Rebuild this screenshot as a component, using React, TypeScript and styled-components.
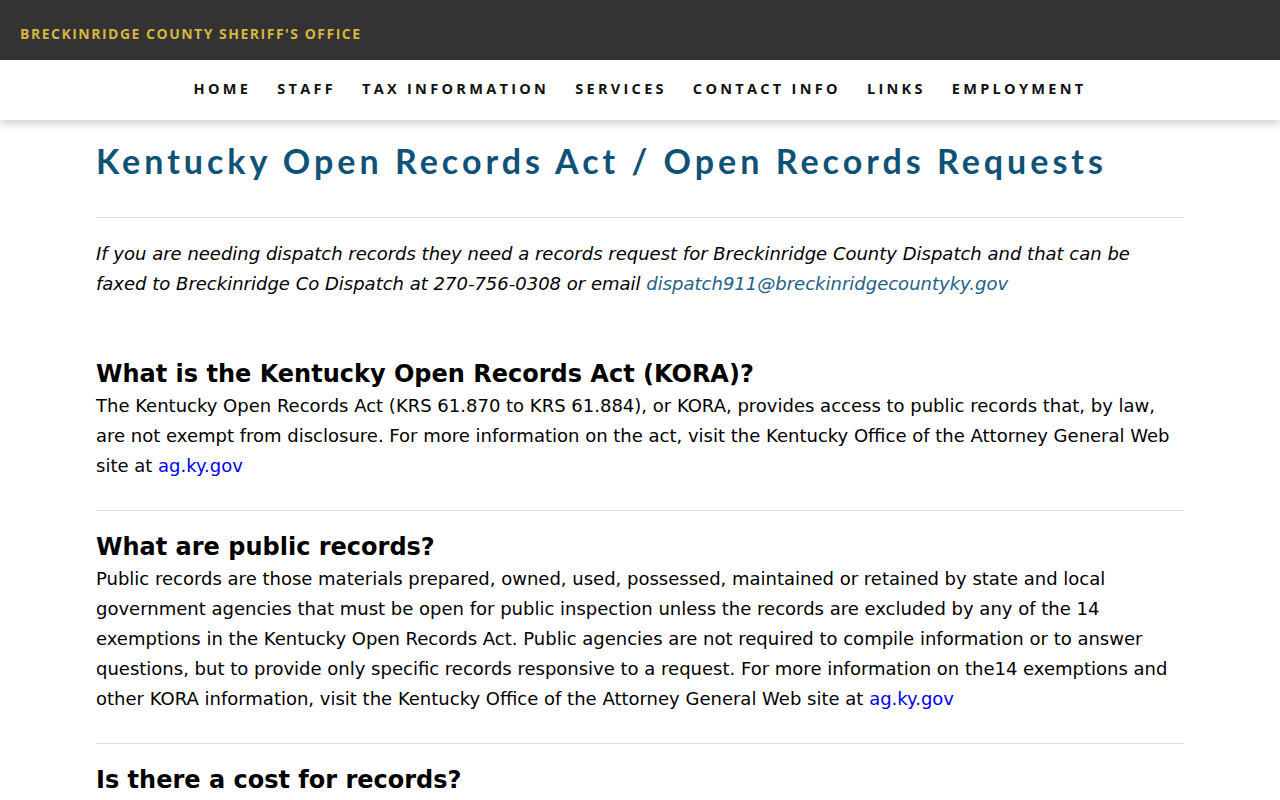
import React from 'react';
import styled, { createGlobalStyle } from 'styled-components';

const GlobalStyle = createGlobalStyle`
  body {
    margin: 0;
    background: #fff;
    font-family: "DejaVu Sans", Verdana, sans-serif;
    color: #000;
  }
`;

const TopBar = styled.div`
  height: 60px;
  box-sizing: border-box;
  background: #333333;
  display: flex;
  align-items: center;
  padding: 6px 20px 0;
`;

const Brand = styled.div`
  font-family: "Open Sans", sans-serif;
  font-weight: 700;
  font-size: 14px;
  letter-spacing: 1.5px;
  color: #d6b640;
  text-transform: uppercase;
`;

const NavBar = styled.nav`
  height: 60px;
  box-sizing: border-box;
  padding-bottom: 4px;
  background: #fff;
  display: flex;
  justify-content: center;
  align-items: center;
  gap: 26px;
  box-shadow: 0 4px 8px rgba(0, 0, 0, 0.18);
  position: relative;
  z-index: 1;
`;

const NavLink = styled.a`
  font-family: "Open Sans", sans-serif;
  font-weight: 700;
  font-size: 14.5px;
  letter-spacing: 3.3px;
  color: #111;
  text-decoration: none;
  text-transform: uppercase;
`;

const Main = styled.main`
  width: 1088px;
  margin: 0 auto;
  padding-top: 20px;
`;

const Title = styled.h1`
  font-family: Lato, sans-serif;
  font-weight: 700;
  font-size: 34px;
  letter-spacing: 4px;
  color: #0f5277;
  margin: 0;
  line-height: 42px;
  padding: 0 0 35px;
`;

const Divider = styled.hr`
  border: none;
  border-top: 1px solid #dddddd;
  margin: 0;
`;

const Intro = styled.p`
  font-style: italic;
  font-size: 18px;
  line-height: 30px;
  margin: 21px 0 0;
  padding-bottom: 39px;
`;

const Section = styled.section`
  padding: 20px 0 29px;
`;

const Heading = styled.h2`
  font-size: 24px;
  font-weight: 700;
  margin: 0;
  line-height: 33px;
`;

const Body = styled.p`
  font-size: 18px;
  line-height: 30px;
  margin: 0;
`;

const Link = styled.a<{ $tone?: 'dark' }>`
  color: ${(p) => (p.$tone === 'dark' ? '#23608a' : '#0000ee')};
  text-decoration: none;
`;

const navItems = ['Home', 'Staff', 'Tax Information', 'Services', 'Contact Info', 'Links', 'Employment'];

export default function App() {
  return (
    <>
      <GlobalStyle />
      <TopBar>
        <Brand>Breckinridge County Sheriff's Office</Brand>
      </TopBar>
      <NavBar>
        {navItems.map((n) => (
          <NavLink key={n} href="#">
            {n}
          </NavLink>
        ))}
      </NavBar>
      <Main>
        <Title>Kentucky Open Records Act / Open Records Requests</Title>
        <Divider />
        <Intro>
          If you are needing dispatch records they need a records request for Breckinridge County Dispatch and that can be
          faxed to Breckinridge Co Dispatch at 270-756-0308 or email{' '}
          <Link $tone="dark" href="#">dispatch911@breckinridgecountyky.gov</Link>
        </Intro>
        <Section>
          <Heading>What is the Kentucky Open Records Act (KORA)?</Heading>
          <Body>
            The Kentucky Open Records Act (KRS 61.870 to KRS 61.884), or KORA, provides access to public records that, by
            law, are not exempt from disclosure. For more information on the act, visit the Kentucky Office of the Attorney
            General Web site at <Link href="#">ag.ky.gov</Link>
          </Body>
        </Section>
        <Divider />
        <Section>
          <Heading>What are public records?</Heading>
          <Body>
            Public records are those materials prepared, owned, used, possessed, maintained or retained by state and local
            government agencies that must be open for public inspection unless the records are excluded by any of the 14
            exemptions in the Kentucky Open Records Act. Public agencies are not required to compile information or to
            answer questions, but to provide only specific records responsive to a request. For more information on the14
            exemptions and other KORA information, visit the Kentucky Office of the Attorney General Web site at{' '}
            <Link href="#">ag.ky.gov</Link>
          </Body>
        </Section>
        <Divider />
        <Section>
          <Heading>Is there a cost for records?</Heading>
        </Section>
      </Main>
    </>
  );
}
